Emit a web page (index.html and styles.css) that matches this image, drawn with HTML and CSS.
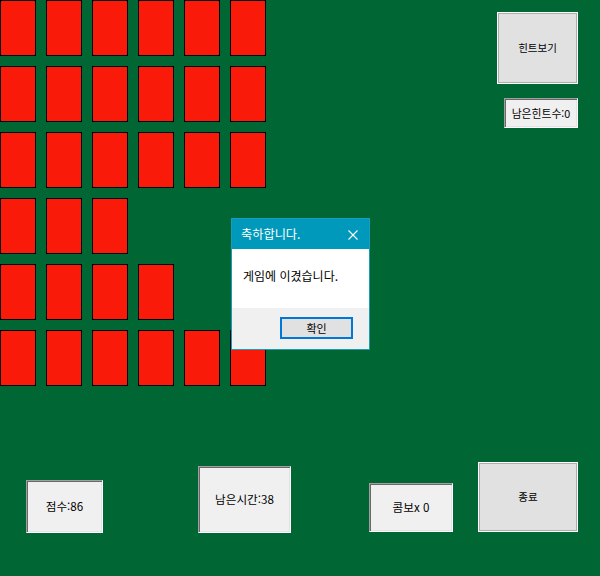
FILE: index.html
```html
<!DOCTYPE html>
<html lang="ko">
<head>
<meta charset="utf-8">
<title>카드 게임</title>
<link rel="stylesheet" href="styles.css">
</head>
<body>
<div class="screen">
  <div class="top">
    <div class="cards">
      <div class="row"><div class="card"></div><div class="card"></div><div class="card"></div><div class="card"></div><div class="card"></div><div class="card"></div></div>
      <div class="row"><div class="card"></div><div class="card"></div><div class="card"></div><div class="card"></div><div class="card"></div><div class="card"></div></div>
      <div class="row"><div class="card"></div><div class="card"></div><div class="card"></div><div class="card"></div><div class="card"></div><div class="card"></div></div>
      <div class="row"><div class="card"></div><div class="card"></div><div class="card"></div></div>
      <div class="row"><div class="card"></div><div class="card"></div><div class="card"></div><div class="card"></div></div>
      <div class="row"><div class="card"></div><div class="card"></div><div class="card"></div><div class="card"></div><div class="card"></div><div class="card"></div></div>
    </div>
    <div class="side">
      <div class="btn hint">힌트보기</div>
      <div class="label hint-count">남은힌트수:0</div>
    </div>
  </div>
  <div class="bottom">
    <div class="label score">점수:86</div>
    <div class="label time">남은시간:38</div>
    <div class="label combo">콤보x 0</div>
    <div class="btn quit">종료</div>
  </div>

  <div class="dialog">
    <div class="dlg-title">
      <span>축하합니다.</span>
      <svg class="close" width="10" height="10" viewBox="0 0 10 10"><path d="M0.5 0.5 L9.5 9.5 M9.5 0.5 L0.5 9.5" stroke="#fff" stroke-width="1.1" fill="none"/></svg>
    </div>
    <div class="dlg-body">게임에 이겼습니다.</div>
    <div class="dlg-foot"><div class="ok">확인</div></div>
  </div>
</div>
</body>
</html>
```
FILE: styles.css
```css
* { box-sizing: border-box; }
html, body { margin: 0; padding: 0; background: #006633; }
body {
  font-family: "Noto Sans CJK KR", "Noto Sans", sans-serif;
  color: #000;
}
.screen {
  position: relative;
  width: 600px;
  height: 576px;
  display: flex;
  flex-direction: column;
  background: #006633;
  overflow: hidden;
}
.top { display: flex; height: 462px; }
.cards {
  width: 497px;
  display: flex;
  flex-direction: column;
  gap: 10px;
}
.row { display: flex; gap: 10px; }
.card {
  width: 36px;
  height: 56px;
  background: #f91a09;
  border: 1px solid #000;
}
.side {
  width: 103px;
  padding: 12px 22px 0 0;
  display: flex;
  flex-direction: column;
  align-items: flex-end;
  gap: 14px;
}
.btn {
  display: flex;
  align-items: center;
  justify-content: center;
  background: #e1e1e1;
  border: 1px solid #fff;
  box-shadow: inset 0 0 0 1px #adadad;
  font-size: 10.5px;
  line-height: 1;
}
.label {
  display: flex;
  align-items: center;
  justify-content: center;
  background: #f0f0f0;
  border: 1px solid;
  border-color: #a0a0a0 #fff #fff #a0a0a0;
  box-shadow: inset 1px 1px 0 #696969, inset -1px -1px 0 #e3e3e3;
  font-size: 11.6px;
  line-height: 1;
}
.hint { width: 81px; height: 72px; }
.hint-count { width: 74px; height: 30px; font-size: 10.8px; }
.bottom { display: flex; align-items: flex-start; }
.score { margin: 18px 0 0 26px; width: 77px; height: 53px; }
.time { margin: 4px 0 0 95px; width: 93px; height: 67px; }
.combo { margin: 21px 0 0 78px; width: 84px; height: 49px; }
.quit { margin: 0 0 0 25px; width: 100px; height: 70px; }

.dialog {
  position: absolute;
  left: 231px;
  top: 218px;
  width: 139px;
  height: 132px;
  border: 1px solid #1a9bbd;
  display: flex;
  flex-direction: column;
  background: #fff;
}
.dlg-title {
  height: 30px;
  background: #0099bb;
  color: #fff;
  font-size: 12.2px;
  display: flex;
  align-items: center;
  justify-content: space-between;
  padding: 0 11px 0 9px;
}
.close { display: block; margin-top: 1px; }
.dlg-body {
  height: 59px;
  padding: 19px 0 0 11px;
  font-size: 12px;
  line-height: 16px;
  background: #fff;
}
.dlg-foot {
  flex: 1;
  background: #f0f0f0;
  padding: 9px 0 0 48px;
}
.ok {
  width: 73px;
  height: 22px;
  border: 2px solid #0078d7;
  background: #e1e1e1;
  font-size: 11px;
  display: flex;
  align-items: center;
  justify-content: center;
}
```
